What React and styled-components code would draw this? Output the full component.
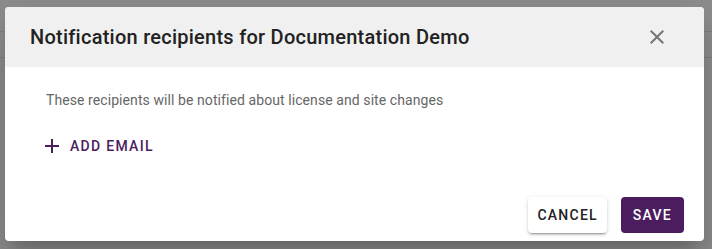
import React from 'react';
import styled, { createGlobalStyle } from 'styled-components';

const Global = createGlobalStyle`
  html, body {
    margin: 0;
    padding: 0;
    background: #8b8b8b;
    font-family: Roboto, "Liberation Sans", sans-serif;
  }
`;

const Page = styled.div`
  position: relative;
  width: 712px;
  height: 249px;
  overflow: hidden;
  background: #8b8b8b;
`;

const BgRow = styled.div`
  height: ${p => p.h}px;
  border-bottom: 1px solid #7d7d7d;
`;

const Dialog = styled.div`
  position: absolute;
  top: 7px;
  left: 5px;
  width: 699px;
  height: 234px;
  background: #fff;
  border-radius: 4px;
  overflow: hidden;
  display: flex;
  flex-direction: column;
  box-shadow: 0 11px 15px -7px rgba(0,0,0,0.2), 0 24px 38px 3px rgba(0,0,0,0.14);
`;

const Header = styled.div`
  height: 60px;
  flex: none;
  background: #f0f0f0;
  display: flex;
  align-items: center;
  padding: 0 23px 0 25px;
`;

const Title = styled.h2`
  flex: 1;
  margin: 0;
  font-size: 20px;
  font-weight: 500;
  color: #222;
  letter-spacing: 0.25px;
`;

const CloseButton = styled.button`
  width: 48px;
  height: 48px;
  border: none;
  background: none;
  padding: 0;
  display: flex;
  align-items: center;
  justify-content: center;
  color: #757575;
`;

const Body = styled.div`
  flex: 1;
  padding: 23px 0 0 41px;
`;

const Hint = styled.p`
  margin: 0;
  font-size: 14px;
  line-height: 20px;
  letter-spacing: 0.08px;
  color: #666;
`;

const AddButton = styled.button`
  margin: 18px 0 0 -10px;
  border: none;
  background: none;
  padding: 6px 8px 6px 4px;
  display: flex;
  align-items: center;
  gap: 6px;
  color: #4b1c5e;
  font-family: inherit;
  font-size: 14px;
  font-weight: 500;
  letter-spacing: 1.3px;
  text-transform: uppercase;
`;

const Footer = styled.div`
  display: flex;
  justify-content: flex-end;
  gap: 14px;
  padding: 0 20px 8px 0;
`;

const ActionButton = styled.button`
  height: 36px;
  padding: 0 ${p => (p.primary ? 12 : 9)}px;
  border: none;
  border-radius: 4px;
  font-family: inherit;
  font-size: 14px;
  font-weight: 500;
  letter-spacing: 1.25px;
  text-transform: uppercase;
  background: ${p => (p.primary ? '#4b1c5e' : '#fff')};
  color: ${p => (p.primary ? '#fff' : '#212121')};
  box-shadow: ${p => (p.primary
    ? 'none'
    : '0 3px 1px -2px rgba(0,0,0,0.2), 0 2px 2px 0 rgba(0,0,0,0.14), 0 1px 5px 0 rgba(0,0,0,0.12)')};
`;

const CloseIcon = () => (
  <svg width="24" height="24" viewBox="0 0 24 24" fill="currentColor">
    <path d="M19 6.41 17.59 5 12 10.59 6.41 5 5 6.41 10.59 12 5 17.59 6.41 19 12 13.41 17.59 19 19 17.59 13.41 12z" />
  </svg>
);

const AddIcon = () => (
  <svg width="24" height="24" viewBox="0 0 24 24" fill="currentColor">
    <path d="M19 13h-6v6h-2v-6H5v-2h6V5h2v6h6v2z" />
  </svg>
);

export default function App() {
  return (
    <Page>
      <Global />
      <BgRow h={31} />
      <BgRow h={25} />
      <Dialog>
        <Header>
          <Title>Notification recipients for Documentation Demo</Title>
          <CloseButton aria-label="close"><CloseIcon /></CloseButton>
        </Header>
        <Body>
          <Hint>These recipients will be notified about license and site changes</Hint>
          <AddButton><AddIcon />Add email</AddButton>
        </Body>
        <Footer>
          <ActionButton>Cancel</ActionButton>
          <ActionButton primary>Save</ActionButton>
        </Footer>
      </Dialog>
    </Page>
  );
}
